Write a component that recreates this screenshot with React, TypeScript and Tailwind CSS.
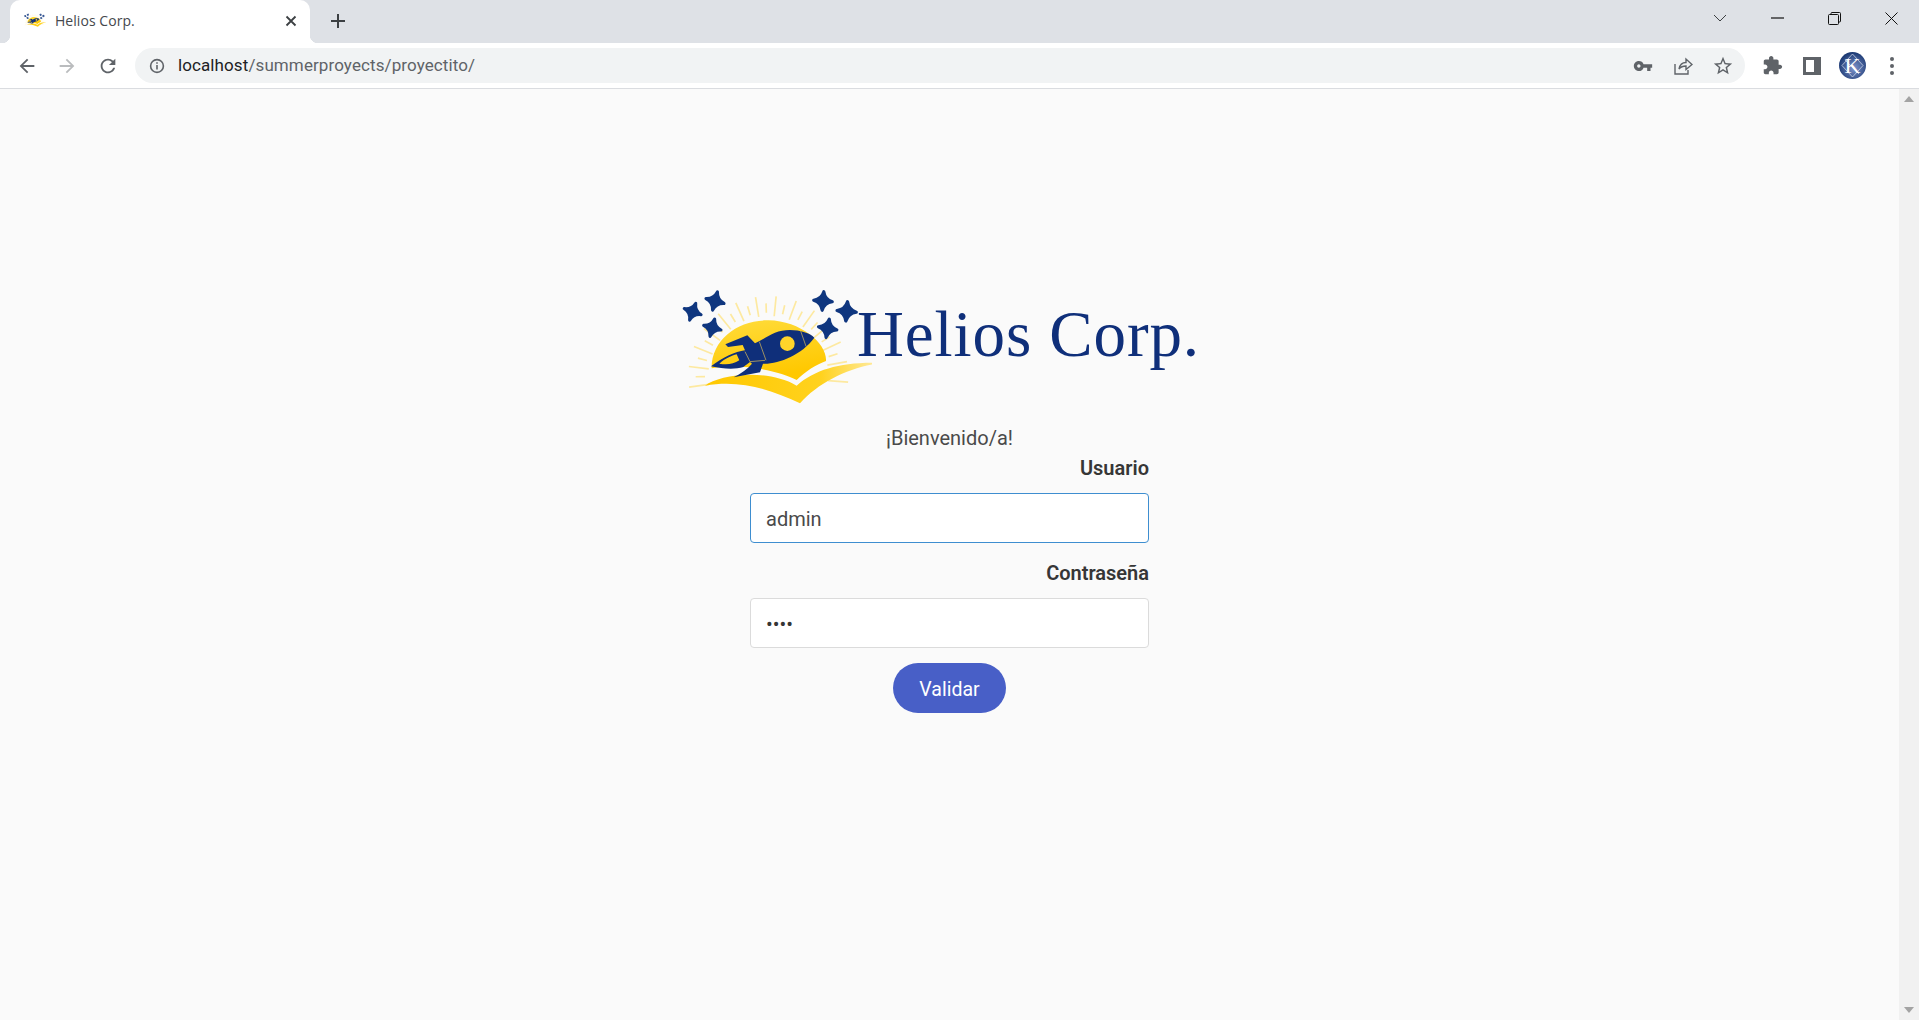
import React from "react";

const Star = ({ x, y, r, rot = 0 }: { x: number; y: number; r: number; rot?: number }) => (
  <path
    transform={`translate(${x} ${y}) rotate(${rot}) scale(${r / 30})`}
    d="M0 -30 C4 -12 12 -4 30 0 C12 4 4 12 0 30 C-4 12 -12 4 -30 0 C-12 -4 -4 -12 0 -30Z"
    fill="#0f367f"
    stroke="#0f367f"
    strokeWidth="10"
    strokeLinejoin="round"
  />
);

const rays = Array.from({ length: 27 }, (_, i) => {
  const a = ((172 + i * 7.4) * Math.PI) / 180;
  const inner = i % 2 ? 190 : 180;
  const outer = i % 2 ? 218 : 240;
  const cx = 295;
  const cy = 285;
  return {
    x1: cx + Math.cos(a) * inner,
    y1: cy + Math.sin(a) * inner,
    x2: cx + Math.cos(a) * outer,
    y2: cy + Math.sin(a) * outer,
  };
});

const LogoMark = ({ className, viewBox, id }: { className: string; viewBox: string; id: string }) => (
  <svg className={className} viewBox={viewBox}>
    <defs>
      <linearGradient id={id} x1="0" y1="0" x2="0.3" y2="1">
        <stop offset="0" stopColor="#ffdc3c" />
        <stop offset="1" stopColor="#ffc800" />
      </linearGradient>
      <linearGradient id={`${id}w`} x1="0" y1="0" x2="1" y2="0">
        <stop offset="0" stopColor="#ffc800" />
        <stop offset="0.65" stopColor="#ffd21e" />
        <stop offset="1" stopColor="#ffeeb0" />
      </linearGradient>
    </defs>
    {rays.map((r, i) => (
      <line key={i} x1={r.x1} y1={r.y1} x2={r.x2} y2={r.y2} stroke="#fde9a0" strokeWidth="5" />
    ))}
    <path d="M125 262 C124 175 205 116 295 118 C395 120 472 190 468 240 C440 250 405 272 380 297 C330 270 215 245 125 262Z" fill={`url(#${id})`} />
    <path d="M105 314 C150 280 290 262 380 314 C440 262 520 242 640 246 C550 254 450 300 390 367 C300 325 210 295 105 314Z" fill={`url(#${id}w)`} />
    <path
      fillRule="evenodd"
      d="M433 170 C415 150 355 138 315 155 C295 163 275 178 255 187 L232 163 L166 190 L174 198 L218 192 L225 208 C195 212 160 228 123 256 C160 264 195 266 220 258 L240 243 L246 248 C232 265 212 278 191 289 L270 274 L279 248 C325 250 395 222 433 170Z M148 248 C165 232 185 224 200 220 L208 238 C190 250 170 252 148 248Z"
      fill="#0f2f7a"
    />
    <circle cx="352" cy="188" r="22" fill="#ffd42a" />
    <path d="M392 150 L408 196 M268 182 L288 238 M225 212 L240 242 M240 242 L285 238" stroke="#b8a35e" strokeWidth="2.5" fill="none" />
    <Star x={68} y={92} r={27} rot={20} />
    <Star x={135} y={60} r={28} rot={15} />
    <Star x={127} y={140} r={27} rot={15} />
    <Star x={459} y={60} r={28} rot={5} />
    <Star x={530} y={91} r={29} rot={5} />
    <Star x={473} y={142} r={28} rot={10} />
  </svg>
);

const Ico = ({ d, className, color = "#5f6368" }: { d: string; className: string; color?: string }) => (
  <svg className={className} viewBox="0 0 24 24" fill={color}>
    <path d={d} />
  </svg>
);

export default function App() {
  return (
    <div className="h-screen w-full flex flex-col overflow-hidden bg-[#fafafa] font-['Roboto',sans-serif]">
      {/* tab strip */}
      <div className="h-[43px] shrink-0 bg-[#dee1e6] flex items-stretch pl-[10px]">
        <div className="w-[300px] bg-white rounded-t-[10px] flex items-center pl-[14px] pr-[13px] pb-[2px] relative">
          <span className="absolute left-[-8px] bottom-0 w-2 h-2 bg-[radial-gradient(circle_at_0_0,#dee1e6_8px,#ffffff_8.5px)]" />
          <span className="absolute right-[-8px] bottom-0 w-2 h-2 bg-[radial-gradient(circle_at_100%_0,#dee1e6_8px,#ffffff_8.5px)]" />
          <LogoMark id="fav" className="w-[22px] h-[19px] shrink-0" viewBox="36 21 560 369" />
          <span className="ml-[9px] text-[14px] tracking-[0.05px] text-[#45484d] font-['Open_Sans',sans-serif] flex-1">Helios Corp.</span>
          <svg className="w-[12px] h-[12px]" viewBox="0 0 12 12" stroke="#3c4043" strokeWidth="1.8">
            <path d="M1.5 1.5 L10.5 10.5 M10.5 1.5 L1.5 10.5" />
          </svg>
        </div>
        <div className="ml-[20px] flex items-center pb-[1px]">
          <svg className="w-[16px] h-[16px]" viewBox="0 0 16 16" stroke="#3c4043" strokeWidth="2">
            <path d="M8 1 V15 M1 8 H15" />
          </svg>
        </div>
        <div className="flex-1" />
        <div className="flex items-center pb-[7px] pr-[21px] gap-[44px]">
          <svg className="w-[14px] h-[8px]" viewBox="0 0 14 8" fill="none" stroke="#3c4043" strokeWidth="1">
            <path d="M1 1 L7 7 L13 1" />
          </svg>
          <svg className="w-[13px] h-[2px]" viewBox="0 0 13 2" stroke="#111" strokeWidth="1.2">
            <path d="M0 1 H13" />
          </svg>
          <svg className="w-[13px] h-[13px]" viewBox="0 0 13 13" fill="none" stroke="#111" strokeWidth="1">
            <rect x="0.5" y="2.5" width="10" height="10" rx="1" />
            <path d="M3 2.5 V1.5 A1 1 0 0 1 4 0.5 H11.5 A1 1 0 0 1 12.5 1.5 V9 A1 1 0 0 1 11.5 10 H10.5" />
          </svg>
          <svg className="w-[13px] h-[13px]" viewBox="0 0 13 13" fill="none" stroke="#111" strokeWidth="1">
            <path d="M0.5 0.5 L12.5 12.5 M12.5 0.5 L0.5 12.5" />
          </svg>
        </div>
      </div>

      {/* toolbar */}
      <div className="h-[46px] shrink-0 bg-white border-b border-[#dadce0] flex items-center pl-[16px]">
        <Ico className="w-[22px] h-[22px]" d="M20 11H7.83l5.59-5.59L12 4l-8 8 8 8 1.41-1.41L7.83 13H20v-2z" />
        <Ico className="w-[22px] h-[22px] ml-[18px]" color="#babcbe" d="M4 11h12.17l-5.59-5.59L12 4l8 8-8 8-1.41-1.41L16.17 13H4v-2z" />
        <Ico className="w-[22px] h-[22px] ml-[19px]" d="M17.65 6.35A7.958 7.958 0 0 0 12 4c-4.42 0-7.99 3.58-7.99 8s3.57 8 7.99 8c3.73 0 6.84-2.55 7.73-6h-2.08A5.99 5.99 0 0 1 12 18c-3.31 0-6-2.69-6-6s2.69-6 6-6c1.66 0 3.14.69 4.22 1.78L13 11h7V4l-2.35 2.35z" />
        <div className="ml-[16px] w-[1610px] h-[35px] rounded-full bg-[#f1f3f4] flex items-center pl-[14px] pr-[11px] shrink-0">
          <svg className="w-[16px] h-[16px] shrink-0" viewBox="0 0 16 16" fill="none" stroke="#5f6368" strokeWidth="1.6">
            <circle cx="8" cy="8" r="6.4" />
            <path d="M8 7 V11.5 M8 4.2 V5.8" />
          </svg>
          <span className="ml-[13px] pt-[1px] text-[17px] tracking-[0.1px] text-[#5f6368] font-['Roboto',sans-serif] flex-1">
            <span className="text-[#202124]">localhost</span>/summerproyects/proyectito/
          </span>
          <Ico className="w-[20px] h-[20px]" d="M12.65 10A5.99 5.99 0 0 0 7 6c-3.31 0-6 2.69-6 6s2.69 6 6 6a5.99 5.99 0 0 0 5.65-4H17v4h4v-4h2v-4H12.65zM7 14c-1.1 0-2-.9-2-2s.9-2 2-2 2 .9 2 2-.9 2-2 2z" />
          <svg className="w-[20px] h-[20px] ml-[20px]" viewBox="0 0 20 20" fill="none" stroke="#5f6368" strokeWidth="1.4">
            <path d="M2 8 V18 H15 V14 M6 13 C7 8 10 6.5 13 6.5 V3 L19 8.5 L13 13.5 V10 C10 10 8 10.5 6 13Z" />
          </svg>
          <Ico className="w-[22px] h-[22px] ml-[19px]" d="M22 9.24l-7.19-.62L12 2 9.19 8.63 2 9.24l5.46 4.73L5.82 21 12 17.27 18.18 21l-1.63-7.03L22 9.24zM12 15.4l-3.76 2.27 1-4.28-3.32-2.88 4.38-.38L12 6.1l1.71 4.04 4.38.38-3.32 2.88 1 4.28L12 15.4z" />
        </div>
        <Ico className="w-[21px] h-[21px] ml-[17px]" d="M20.5 11H19V7c0-1.1-.9-2-2-2h-4V3.5C13 2.12 11.88 1 10.5 1S8 2.12 8 3.5V5H4c-1.1 0-1.99.9-1.99 2v3.8H3.5c1.49 0 2.7 1.21 2.7 2.7s-1.21 2.7-2.7 2.7H2V20c0 1.1.9 2 2 2h3.8v-1.5c0-1.49 1.21-2.7 2.7-2.7 1.49 0 2.7 1.21 2.7 2.7V22H17c1.1 0 2-.9 2-2v-4h1.5c1.38 0 2.5-1.12 2.5-2.5S21.88 11 20.5 11z" />
        <div className="ml-[20px] w-[18px] h-[18px] bg-white border-[3px] border-[#5f6368] border-r-[7px] shrink-0" />
        <div className="ml-[18px] w-[27px] h-[27px] rounded-full shrink-0 flex items-center justify-center overflow-hidden relative bg-[radial-gradient(circle_at_55%_60%,#7f95cc,#17356f_75%)] text-white font-['Liberation_Serif',serif] text-[22px] leading-none">
          <svg className="absolute inset-0 w-[27px] h-[27px]" viewBox="0 0 27 27" fill="none" stroke="#dfe6f5" strokeWidth="0.7">
            <path d="M13.5 2 L24 13.5 L13.5 25 L3 13.5Z M6 8 L20 22" />
          </svg>
          <span className="relative">K</span>
        </div>
        <div className="ml-[24px] flex flex-col gap-[3px] shrink-0">
          <span className="w-1 h-1 rounded-full bg-[#5f6368]" />
          <span className="w-1 h-1 rounded-full bg-[#5f6368]" />
          <span className="w-1 h-1 rounded-full bg-[#5f6368]" />
        </div>
      </div>

      {/* page */}
      <div className="flex-1 min-h-0 flex">
        <main className="flex-1 flex flex-col items-center pt-[199px]">
          <div className="w-[535px] h-[135px] flex items-start">
            <LogoMark id="logo" className="w-[190px] h-[123px] shrink-0" viewBox="36 21 570 369" />
            <span className="ml-[-15px] mt-[14px] text-[65px] leading-[65px] tracking-[0.9px] text-[#0f2f7a] font-['Liberation_Serif',serif] whitespace-nowrap">
              Helios Corp.
            </span>
          </div>
          <p className="text-[20px] leading-[30px] text-[#4a4a4a]">¡Bienvenido/a!</p>
          <form className="w-[399px] flex flex-col">
            <label className="text-right text-[20px] leading-[30px] font-semibold text-[#363636] mb-[10px]">Usuario</label>
            <input
              readOnly
              value="admin"
              className="h-[50px] bg-white border border-[#3e8ed0] rounded-[4px] pl-[15px] pr-[15px] pt-[2px] text-[20px] text-[#4a4a4a] outline-none"
            />
            <label className="mt-[15px] text-right text-[20px] leading-[30px] font-semibold text-[#363636] mb-[10px]">Contraseña</label>
            <input
              readOnly
              type="password"
              value="1234"
              className="h-[50px] bg-white border border-[#dbdbdb] rounded-[4px] px-[15px] pt-[2px] text-[20px] text-[#363636] outline-none"
            />
            <button type="button" className="mt-[15px] self-center w-[113px] h-[50px] pt-[3px] rounded-full bg-[#485fc7] text-white text-[19.5px]">
              Validar
            </button>
          </form>
        </main>
        <aside className="w-[20px] shrink-0 bg-[#f1f1f1] flex flex-col justify-between items-center py-[7px]">
          <svg className="w-[10px] h-[6px]" viewBox="0 0 10 6" fill="#a3a3a3"><path d="M5 0 L10 6 H0Z" /></svg>
          <svg className="w-[10px] h-[6px]" viewBox="0 0 10 6" fill="#a3a3a3"><path d="M0 0 H10 L5 6Z" /></svg>
        </aside>
      </div>
    </div>
  );
}
